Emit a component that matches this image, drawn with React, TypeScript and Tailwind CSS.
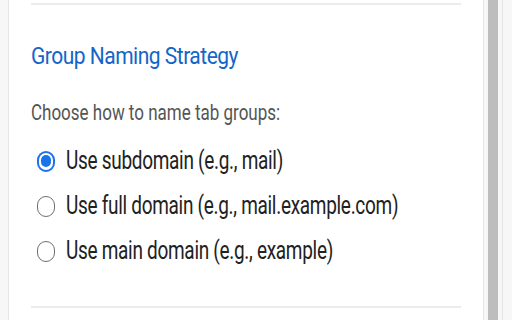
import { useState } from "react";

const options = [
  { id: "subdomain", label: "Use subdomain (e.g., mail)" },
  { id: "full", label: "Use full domain (e.g., mail.example.com)" },
  { id: "main", label: "Use main domain (e.g., example)" },
];

export default function App() {
  const [strategy, setStrategy] = useState("subdomain");

  return (
    <div
      className="flex h-[320px] w-[512px] overflow-hidden bg-[#f7f7f7]"
      style={{ fontFamily: "Roboto, 'Liberation Sans', sans-serif" }}
    >
      {/* settings card */}
      <div className="ml-[8px] w-[476px] border-x border-[#e6e6e6] bg-white px-[22px]">
        <div className="mt-[3px] h-[2px] bg-[#ececec]" />

        <h2 className="mt-[37px] origin-left scale-y-[1.18] text-[21px] leading-[28px] tracking-[-0.5px] text-[#1465c7]">
          Group Naming Strategy
        </h2>

        <p className="mt-[30px] origin-left scale-y-[1.35] text-[17px] leading-[24px] text-[#555555]">
          Choose how to name tab groups:
        </p>

        <div className="mt-[25px] flex flex-col gap-[21px] pl-[6px]">
          {options.map((o) => (
            <label
              key={o.id}
              className="flex cursor-pointer items-center gap-[11px] text-[19px] leading-[24px] tracking-[-0.3px] text-[#222222]"
              onClick={() => setStrategy(o.id)}
            >
              {strategy === o.id ? (
                <span className="flex h-[21px] w-[18px] items-center justify-center rounded-full border-2 border-[#1a73e8]">
                  <span className="h-[12px] w-[10px] rounded-full bg-[#1a73e8]" />
                </span>
              ) : (
                <span className="h-[21px] w-[18px] rounded-full border border-[#6f6f6f]" />
              )}
              <span className="scale-y-[1.35]">{o.label}</span>
            </label>
          ))}
        </div>

        <div className="mt-[43px] h-[2px] bg-[#ececec]" />
      </div>

      {/* scrollbar */}
      <div className="ml-[4px] w-[10px] bg-[#bdbdbd]" />
      <div className="ml-[4px] w-[1px] bg-[#e4e4e4]" />
    </div>
  );
}
